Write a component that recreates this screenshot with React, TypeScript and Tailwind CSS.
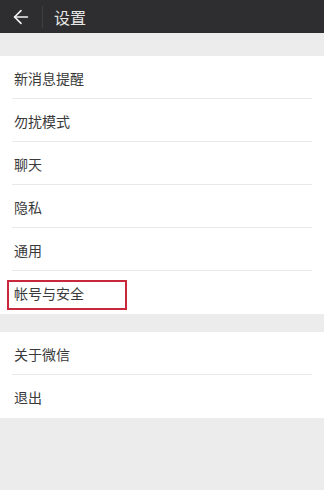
import { ArrowLeft } from "lucide-react";

const groupOne = ["新消息提醒", "勿扰模式", "聊天", "隐私", "通用", "帐号与安全"];
const groupTwo = ["关于微信", "退出"];

const Row = ({ label, last, marked }: { label: string; last?: boolean; marked?: boolean }) => (
  <div className="relative flex h-[43px] items-center px-[14px]">
    <span className="text-[14px] leading-none text-[#3a3a3a]">{label}</span>
    {marked && (
      <div className="absolute left-[7px] top-[9px] h-[30px] w-[120px] border-2 border-[#c9283c]" />
    )}
    {!last && <div className="absolute bottom-0 left-[12px] right-[12px] h-px bg-[#e9e9e9]" />}
  </div>
);

export default function App() {
  return (
    <div
      className="flex h-[490px] w-[324px] flex-col bg-[#ececec]"
      style={{ fontFamily: '"Noto Sans CJK SC", "Liberation Sans", sans-serif' }}
    >
      <div className="flex h-[33px] items-center bg-[#2e2e30]">
        <ArrowLeft size={22} strokeWidth={1.8} className="ml-[10px] text-[#f2f2f2]" />
        <div className="ml-[10px] h-[22px] w-px bg-[#3f3f41]" />
        <span className="ml-[11px] text-[16px] leading-none text-[#e6e6e6]">设置</span>
      </div>
      <div className="mt-[23px] bg-white">
        {groupOne.map((l, i) => (
          <Row key={l} label={l} last={i === groupOne.length - 1} marked={l === "帐号与安全"} />
        ))}
      </div>
      <div className="mt-[18px] bg-white">
        {groupTwo.map((l, i) => (
          <Row key={l} label={l} last={i === groupTwo.length - 1} />
        ))}
      </div>
    </div>
  );
}
